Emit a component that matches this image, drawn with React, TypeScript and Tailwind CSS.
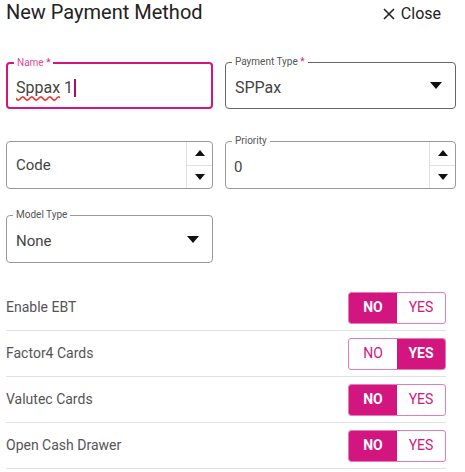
import React from "react";

function Spinner() {
  return (
    <div className="flex flex-col w-[26px] border-l border-[#e0e0e0] h-full">
      <div className="flex-1 flex items-center justify-center border-b border-[#e0e0e0]">
        <svg width="10" height="6" viewBox="0 0 10 6"><path d="M0 6 L5 0 L10 6 Z" fill="#111" /></svg>
      </div>
      <div className="flex-1 flex items-center justify-center">
        <svg width="10" height="6" viewBox="0 0 10 6"><path d="M0 0 L5 6 L10 0 Z" fill="#111" /></svg>
      </div>
    </div>
  );
}

function Caret() {
  return (
    <svg width="12" height="7" viewBox="0 0 12 7"><path d="M0 0 L6 7 L12 0 Z" fill="#111" /></svg>
  );
}

function Toggle({ yes }: { yes: boolean }) {
  return (
    <div className="flex w-[98px] h-[32px] rounded-[3px] border border-[#e37cb7] overflow-hidden text-[14px]">
      <div
        className={
          yes
            ? "flex-1 flex items-center justify-center text-[#d3157f]"
            : "flex-1 flex items-center justify-center bg-[#d3157f] text-white font-bold"
        }
      >
        NO
      </div>
      <div
        className={
          yes
            ? "flex-1 flex items-center justify-center bg-[#d3157f] text-white font-bold"
            : "flex-1 flex items-center justify-center text-[#d3157f]"
        }
      >
        YES
      </div>
    </div>
  );
}

function Row({ label, yes }: { label: string; yes: boolean }) {
  return (
    <div className="flex items-center justify-between h-[46px] border-b border-[#e2e2e2]">
      <span className="text-[14px] text-[#555]">{label}</span>
      <Toggle yes={yes} />
    </div>
  );
}

export default function App() {
  return (
    <div
      className="w-[465px] h-[472px] bg-white overflow-hidden"
      style={{ fontFamily: "Roboto, 'Liberation Sans', sans-serif" }}
    >
      <div className="flex items-start justify-between pl-[6px] pr-[24px]">
        <div className="text-[20px] leading-[24px] text-[#222]">New Payment Method</div>
        <div className="flex items-center gap-[6px] mt-[2px] text-[16px] text-[#222]">
          <svg width="12" height="12" viewBox="0 0 12 12">
            <path d="M1 1 L11 11 M11 1 L1 11" stroke="#222" strokeWidth="1.6" />
          </svg>
          <span>Close</span>
        </div>
      </div>

      <div className="pl-[6px] mt-[36px] grid grid-cols-[207px_231px] gap-x-[12px]">
        {/* Name */}
        <div className="relative h-[47px] rounded-[4px] border-2 border-[#d3157f] flex items-center pl-[8px]">
          <span className="absolute -top-[7px] left-[6px] bg-white px-[3px] text-[10px] leading-[12px] text-[#e04a9e]">
            Name <span className="text-[#e0245e]">*</span>
          </span>
          <span className="text-[16px] text-[#444] mt-[4px]">
            <span className="underline decoration-wavy decoration-[#e33] underline-offset-[3px]">Sppax</span> 1
          </span>
          <span className="w-[1.5px] h-[18px] bg-[#a0146a] ml-[1px] mt-[4px]" />
        </div>
        {/* Payment Type */}
        <div className="relative h-[47px] rounded-[4px] border-[1.5px] border-[#666] flex items-center justify-between pl-[9px] pr-[13px]">
          <span className="absolute -top-[7px] left-[6px] bg-white px-[3px] text-[10px] leading-[12px] text-[#555]">
            Payment Type <span className="text-[#e0245e]">*</span>
          </span>
          <span className="text-[16px] text-[#444] mt-[4px]">SPPax</span>
          <Caret />
        </div>

        {/* Code */}
        <div className="mt-[32px] h-[48px] rounded-[4px] border border-[#999] flex items-stretch justify-between">
          <span className="self-center pl-[9px] text-[15px] text-[#444]">Code</span>
          <Spinner />
        </div>
        {/* Priority */}
        <div className="relative mt-[32px] h-[48px] rounded-[4px] border border-[#999] flex items-stretch justify-between">
          <span className="absolute -top-[7px] left-[6px] bg-white px-[3px] text-[10px] leading-[12px] text-[#555]">
            Priority
          </span>
          <span className="self-center pl-[8px] mt-[4px] text-[15px] text-[#444]">0</span>
          <Spinner />
        </div>

        {/* Model Type */}
        <div className="relative mt-[26px] h-[48px] rounded-[4px] border border-[#999] flex items-center justify-between pl-[9px] pr-[13px]">
          <span className="absolute -top-[7px] left-[6px] bg-white px-[3px] text-[10px] leading-[12px] text-[#555]">
            Model Type
          </span>
          <span className="text-[15px] text-[#444] mt-[4px]">None</span>
          <Caret />
        </div>
        <div />
      </div>

      <div className="ml-[6px] w-[440px] mt-[22px]">
        <Row label="Enable EBT" yes={false} />
        <Row label="Factor4 Cards" yes={true} />
        <Row label="Valutec Cards" yes={false} />
        <Row label="Open Cash Drawer" yes={false} />
      </div>
    </div>
  );
}
